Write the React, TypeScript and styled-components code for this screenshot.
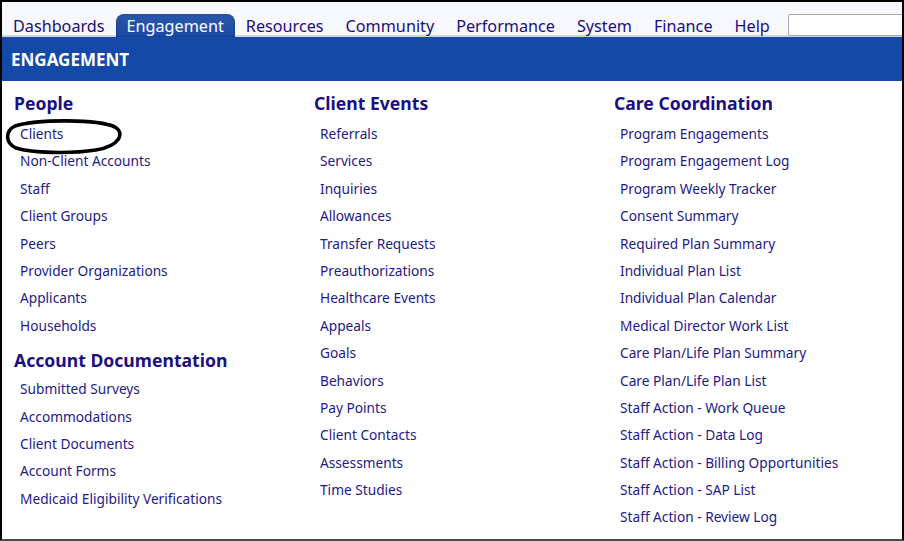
import styled, { createGlobalStyle } from "styled-components"

const GlobalStyle = createGlobalStyle`
    body {
        margin: 0;
        background: #ffffff;
        font-family: "Noto Sans", "Open Sans", sans-serif;
    }
`

const navItems = ['Dashboards', 'Engagement', 'Resources', 'Community', 'Performance', 'System', 'Finance', 'Help']

type Section = {
    title: string
    links: string[]
}

const columns: Section[][] = [
    [{
        title: 'People',
        links: ['Clients', 'Non-Client Accounts', 'Staff', 'Client Groups', 'Peers', 'Provider Organizations', 'Applicants', 'Households'],
    }, {
        title: 'Account Documentation',
        links: ['Submitted Surveys', 'Accommodations', 'Client Documents', 'Account Forms', 'Medicaid Eligibility Verifications'],
    }],
    [{
        title: 'Client Events',
        links: ['Referrals', 'Services', 'Inquiries', 'Allowances', 'Transfer Requests', 'Preauthorizations', 'Healthcare Events', 'Appeals', 'Goals', 'Behaviors', 'Pay Points', 'Client Contacts', 'Assessments', 'Time Studies'],
    }],
    [{
        title: 'Care Coordination',
        links: ['Program Engagements', 'Program Engagement Log', 'Program Weekly Tracker', 'Consent Summary', 'Required Plan Summary', 'Individual Plan List', 'Individual Plan Calendar', 'Medical Director Work List', 'Care Plan/Life Plan Summary', 'Care Plan/Life Plan List', 'Staff Action - Work Queue', 'Staff Action - Data Log', 'Staff Action - Billing Opportunities', 'Staff Action - SAP List', 'Staff Action - Review Log'],
    }],
]

const Frame = styled.div`
    width: 904px;
    height: 541px;
    box-sizing: border-box;
    border: 2px solid #000000;
    border-bottom-color: #4a4a4a;
    overflow: hidden;
    display: flex;
    flex-direction: column;
    background: #ffffff;
`

const NavBar = styled.nav`
    height: 35px;
    flex-shrink: 0;
    display: flex;
    align-items: flex-end;
    background: #f7f8fd;
    box-shadow: inset 0 -2px 0 #d4d4d8;
`

const NavTab = styled.a<{ $active?: boolean }>`
    height: 23px;
    box-sizing: border-box;
    padding: 2px 11px 0;
    display: flex;
    align-items: center;
    font-size: 16.2px;
    line-height: 21px;
    text-decoration: none;
    cursor: pointer;
    color: ${({ $active }) => ($active ? '#ffffff' : '#1c0e7c')};
    ${({ $active }) => $active ? `
        background: linear-gradient(#2a57ab, #1b4aa4);
        border-radius: 8px 8px 0 0;
        box-shadow: inset 0 0 3px rgba(0, 0, 40, 0.35);
    ` : ''}
`

const SearchInput = styled.input`
    margin-left: 7px;
    margin-bottom: 1px;
    width: 140px;
    height: 22px;
    box-sizing: border-box;
    border: 1px solid #a9a9a9;
    border-radius: 2px;
    background: #ffffff;
    flex-shrink: 0;
    outline: none;
`

const Banner = styled.div`
    height: 44px;
    flex-shrink: 0;
    display: flex;
    align-items: center;
    padding-left: 9px;
    background: #1449a8;
    color: #ffffff;
    font-weight: 700;
    font-size: 17px;
`

const Content = styled.div`
    display: grid;
    grid-template-columns: 300px 300px 290px;
    padding: 11px 0 0 12px;
`

const Column = styled.div`
    display: flex;
    flex-direction: column;
`

const Heading = styled.h2`
    margin: 0;
    height: 22px;
    line-height: 22px;
    font-size: 17.6px;
    font-weight: 700;
    color: #1b1080;
`

const LinkList = styled.ul<{ $first: boolean }>`
    list-style: none;
    margin: ${({ $first }) => ($first ? '6px 0 10px' : '4px 0 10px')};
    padding: 0;
`

const LinkItem = styled.li`
    position: relative;
    height: 27.4px;
    line-height: 27.4px;
    padding-left: 6px;
    font-size: 13.7px;
    color: #241a88;
    white-space: nowrap;
`

// hand-drawn marker ring around a link
const Ring = styled.svg`
    position: absolute;
    left: -8px;
    top: -2px;
    width: 118px;
    height: 36px;
    overflow: visible;
    pointer-events: none;
`

const Header = () => (
    <>
        <NavBar>
            {navItems.map(item => (
                <NavTab key={item} $active={item === 'Engagement'}>{item}</NavTab>
            ))}
            <SearchInput />
        </NavBar>
        <Banner>ENGAGEMENT</Banner>
    </>
)

export default function App() {
    return (
        <>
            <GlobalStyle />
            <Frame>
                <Header />
                <Content>
                    {columns.map((sections, i) => (
                        <Column key={i}>
                            {sections.map((section, j) => (
                                <div key={section.title}>
                                    <Heading>{section.title}</Heading>
                                    <LinkList $first={j === 0}>
                                        {section.links.map(link => (
                                            <LinkItem key={link}>
                                                {link}
                                                {link === 'Clients' && (
                                                    <Ring viewBox="0 0 118 36">
                                                        <path d="M9 8 C 32 1, 92 1, 109 9 C 119 15, 114 28, 90 32 C 64 36, 26 35, 10 30 C -1 25, -1 13, 9 8 Z" fill="none" stroke="#000" strokeWidth="3.6" />
                                                    </Ring>
                                                )}
                                            </LinkItem>
                                        ))}
                                    </LinkList>
                                </div>
                            ))}
                        </Column>
                    ))}
                </Content>
            </Frame>
        </>
    )
}
